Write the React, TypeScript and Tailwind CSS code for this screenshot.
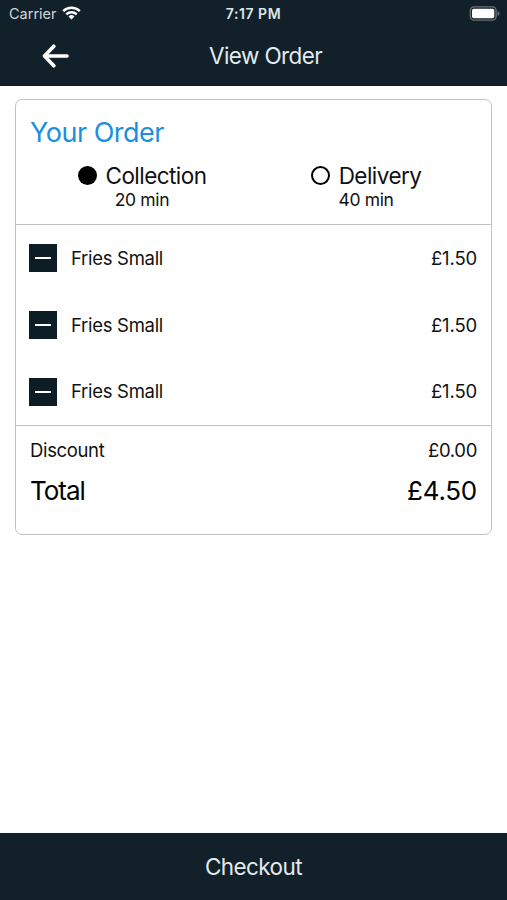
const items = [
  { name: "Fries Small", price: "£1.50" },
  { name: "Fries Small", price: "£1.50" },
  { name: "Fries Small", price: "£1.50" },
];

function StatusBar() {
  return (
    <div className="grid h-[27px] grid-cols-3 items-center pl-[9px] pr-[7px]">
      <div className="flex items-center gap-[5px]">
        <span className="text-[14.5px] tracking-[0px] text-[#cfd6da]">Carrier</span>
        <svg className="-mt-px" width="19" height="14" viewBox="0 0 19 14" fill="none" stroke="#fff" strokeWidth="2.5">
          <path d="M1.2 5.2a11.9 11.9 0 0 1 16.6 0" />
          <path d="M4.3 8.3a7.5 7.5 0 0 1 10.4 0" />
          <path d="M9.5 13.6 6.5 10.5a4.4 4.4 0 0 1 6 0z" fill="#fff" stroke="none" />
        </svg>
      </div>
      <span className="-ml-[2px] text-center text-[14px] font-semibold tracking-[0.55px] text-[#dfe5e8]">7:17 PM</span>
      <svg className="-mt-px justify-self-end" width="31" height="15" viewBox="0 0 31 15">
        <rect x="1.4" y="0.9" width="25.700" height="13.2" rx="3.6" fill="none" stroke="#67737a" strokeWidth="1.4" />
        <rect x="3" y="2.7" width="22.3" height="9.6" rx="1.8" fill="#fff" />
        <path d="M28.6 5v5c1.1-.4 1.9-1.300 1.900-2.500s-.8-2.100-1.900-2.500z" fill="#67737a" />
      </svg>
    </div>
  );
}

function Option({ label, time, selected }: { label: string; time: string; selected?: boolean }) {
  return (
    <div className="flex flex-col items-center">
      <div className="flex h-[27px] items-center gap-[9px]">
        <span
          className={
            selected
              ? "size-[19px] rounded-full bg-black"
              : "size-[19px] rounded-full border-2 border-black"
          }
        />
        <span className="text-[22.5px] tracking-[-0.55px]">{label}</span>
      </div>
      <span className="text-[17.5px] leading-[21px] tracking-[-0.35px]">{time}</span>
    </div>
  );
}

export default function App() {
  return (
    <div className="flex h-[900px] w-[507px] flex-col bg-white font-['Inter',sans-serif] text-[#111]">
      <header className="h-[86px] bg-[#12202a]">
        <StatusBar />
        <div className="flex h-[58px] items-center">
          <svg className="ml-[42px]" width="27" height="24" viewBox="0 0 27 24" fill="none" stroke="#fff" strokeWidth="3.6">
            <path d="M11.800 2.200 2.500 12l9.300 9.800M3 12h22" strokeLinejoin="round" strokeLinecap="round" />
          </svg>
          <h1 className="ml-[140px] text-[22.5px] tracking-[-0.6px] text-[#e3eaee]">View Order</h1>
        </div>
      </header>

      <main className="flex-1 px-[15px] pt-[13px]">
        <section className="flex h-[436px] flex-col rounded-[7px] border-[1.5px] border-[#c2c2c2]">
          <div className="h-[125px] border-b-[1.5px] border-[#c2c2c2] pt-4">
            <h2 className="pl-[14px] text-[27px] leading-[34px] tracking-[-0.5px] text-[#1a8fe0]">Your Order</h2>
            <div className="grid grid-cols-[224px_224px] pl-[14px] pt-3">
              <Option label="Collection" time="20 min" selected />
              <Option label="Delivery" time="40 min" />
            </div>
          </div>
          <ul className="grid h-[201px] grid-rows-3 border-b-[1.5px] border-[#c2c2c2]">
            {items.map((item, i) => (
              <li key={i} className="flex items-center pl-[13px] pr-[14px] text-[18.5px] tracking-[-0.3px]">
                <button className="flex size-7 items-center justify-center bg-[#0d1d26]">
                  <span className="h-[2px] w-4 bg-white" />
                </button>
                <span className="ml-[14px] pt-px">{item.name}</span>
                <span className="ml-auto pt-px tracking-[-0.15px]">{item.price}</span>
              </li>
            ))}
          </ul>
          <dl className="px-[14px] pt-[11px]">
            <div className="flex h-[28px] items-center justify-between text-[18.5px] tracking-[-0.35px]">
              <dt>Discount</dt>
              <dd>£0.00</dd>
            </div>
            <div className="mt-[6px] flex h-[38px] items-center justify-between text-[26px] text-black">
              <dt className="tracking-[-1px]">Total</dt>
              <dd className="tracking-[-0.25px]">£4.50</dd>
            </div>
          </dl>
        </section>
      </main>

      <button className="h-[67px] bg-[#12202a] text-[22.500px] tracking-[-0.600px] text-[#e3eaee]">Checkout</button>
    </div>
  );
}
